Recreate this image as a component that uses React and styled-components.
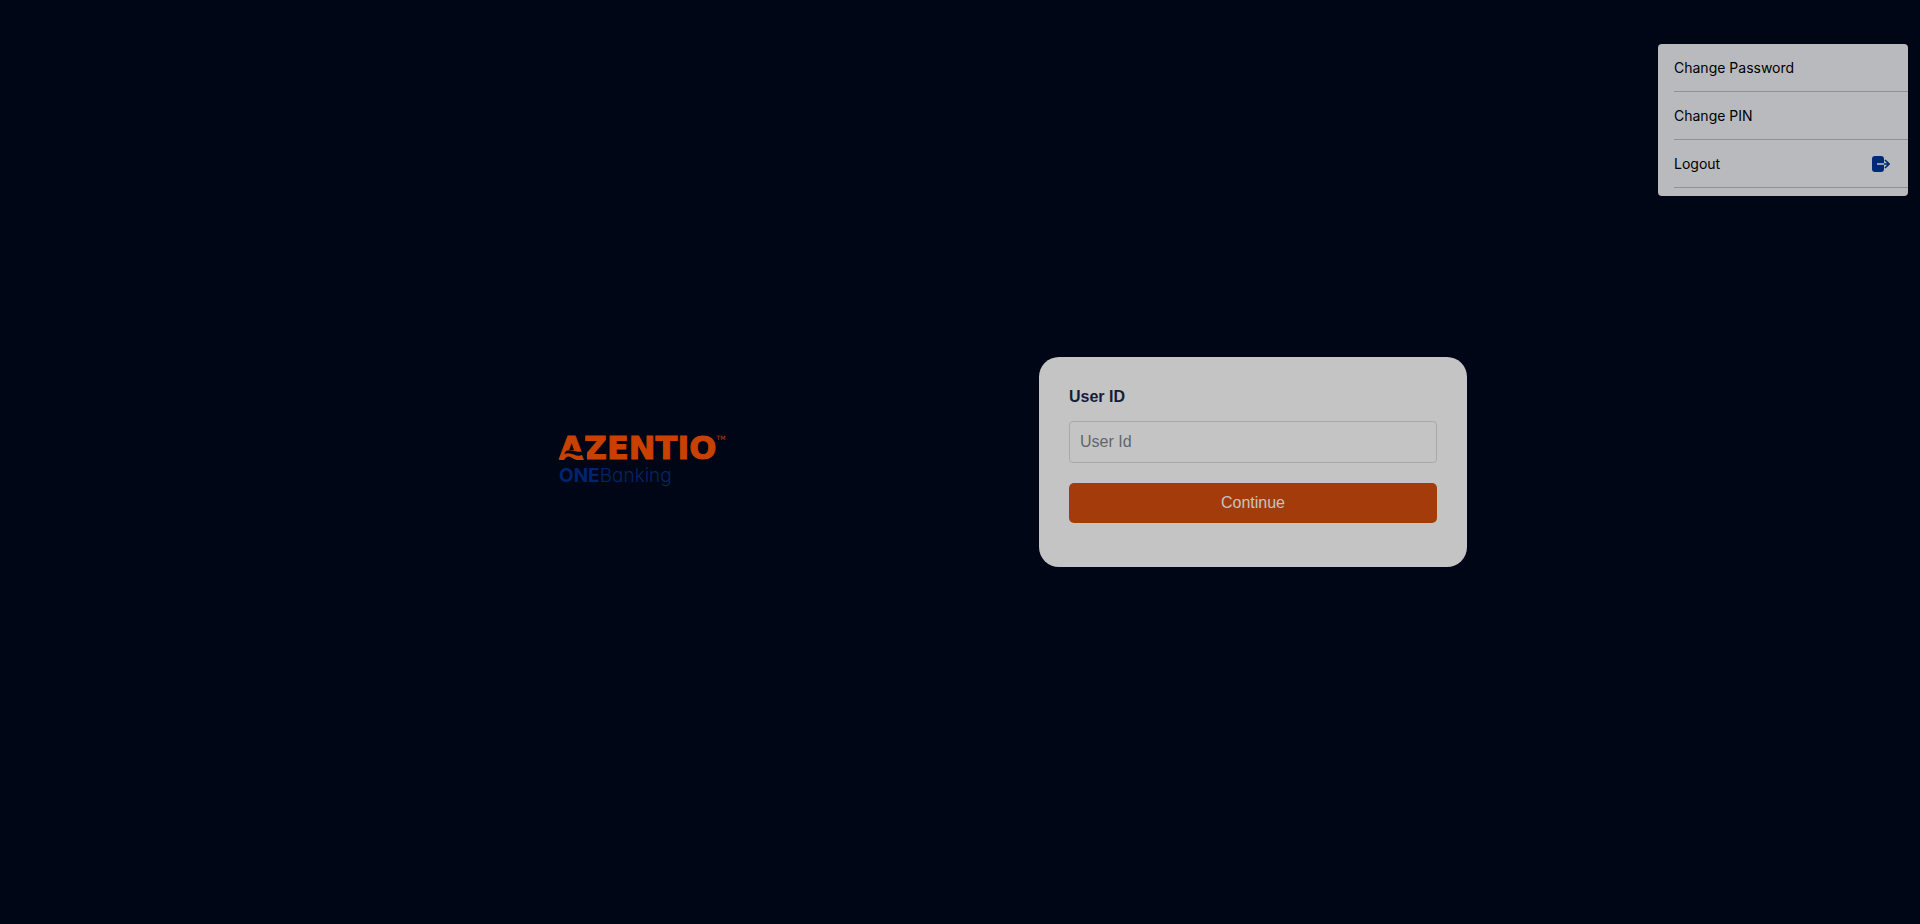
import React from "react";
import styled, { createGlobalStyle } from "styled-components";

const GlobalStyle = createGlobalStyle`
  *, *::before, *::after { box-sizing: border-box; }
  body {
    margin: 0;
    background: #000615;
    font-family: "Liberation Sans", Arial, sans-serif;
    font-size: 16px;
  }
`;

const Page = styled.main`
  position: relative;
  min-height: 100vh;
  display: grid;
  grid-template-columns: 25vw minmax(0, 428px);
  align-items: center;
  padding-left: calc(25vw + 79px);
`;

const Brand = styled.div`
  display: flex;
  flex-direction: column;
  align-items: flex-start;
`;

const Wordmark = styled.div`
  position: relative;
  display: flex;
  align-items: flex-start;
  font-family: "DejaVu Sans", sans-serif;
  font-weight: 700;
  font-size: 32px;
  line-height: 28px;
  color: #c84100;
  -webkit-text-stroke: 1px #c84100;
`;

const Trademark = styled.span`
  font-size: 6px;
  line-height: 8px;
  font-weight: 400;
  -webkit-text-stroke: 0;
`;

const Swoosh = styled.svg`
  position: absolute;
  left: 0;
  top: 0;
  width: 28px;
  height: 28px;
`;

const Product = styled.div`
  font-family: Inter, sans-serif;
  font-feature-settings: "cv11";
  font-size: 19px;
  line-height: 28px;
  font-weight: 300;
  color: #00246f;

  strong { font-weight: 700; }
`;

const Card = styled.form`
  display: flex;
  flex-direction: column;
  padding: 29px 30px 44px;
  border-radius: 20px;
  background: #c4c4c4;
`;

const Label = styled.label`
  margin-bottom: 14px;
  font-weight: 700;
  line-height: 21px;
  color: #161d38;
`;

const TextField = styled.input`
  width: 100%;
  height: 42px;
  margin-bottom: 20px;
  padding: 0 10px;
  border: 1px solid #a9a9a9;
  border-radius: 4px;
  background: transparent;
  font: inherit;
  color: #161d38;

  &::placeholder { color: #5f666d; opacity: 1; }
`;

const SubmitButton = styled.button`
  height: 40px;
  border: 0;
  border-radius: 5px;
  background: #a43b0b;
  color: #c4c4c4;
  font: inherit;
`;

const Menu = styled.nav`
  position: absolute;
  top: 44px;
  right: 12px;
  width: 250px;
  padding: 0 0 8px 16px;
  border-radius: 4px;
  background: #b9babd;
`;

const MenuItem = styled.button`
  display: flex;
  align-items: center;
  justify-content: space-between;
  width: 100%;
  height: 48px;
  padding: 0 18px 0 0;
  border: 0;
  border-bottom: 1px solid #8e9095;
  background: none;
  font-family: Inter, sans-serif;
  font-size: 14px;
  text-align: left;
  color: #000;
`;

function LogoutIcon() {
  return (
    <svg width="18" height="16" viewBox="0 0 18 16" fill="none" aria-hidden="true">
      <rect width="12" height="16" rx="3" fill="#002878" />
      <path d="M5 8H12" stroke="#b9babd" strokeWidth="1.6" />
      <path d="M12 8H17M13 4L17 8L13 12" stroke="#002878" strokeWidth="1.6" />
    </svg>
  );
}

export default function App() {
  return (
    <>
      <GlobalStyle />
      <Page>
        <Brand>
          <Wordmark>
            AZENTIO
            <Trademark>TM</Trademark>
            <Swoosh viewBox="0 0 28 28" fill="none" aria-hidden="true">
              <path d="M7 17C13 14 17 20 28 17V28H0L4 22Z" fill="#000615" />
              <path d="M5 16L0 26H5C10 18 13 26 19 26H25L23 21C17 24 13 17 5 20Z" fill="#c84100" />
            </Swoosh>
          </Wordmark>
          <Product>
            <strong>ONE</strong>Banking
          </Product>
        </Brand>
        <Card onSubmit={(event) => event.preventDefault()}>
          <Label htmlFor="user-id">User ID</Label>
          <TextField id="user-id" type="text" placeholder="User Id" />
          <SubmitButton type="submit">Continue</SubmitButton>
        </Card>
        <Menu aria-label="Account">
          <MenuItem type="button">Change Password</MenuItem>
          <MenuItem type="button">Change PIN</MenuItem>
          <MenuItem type="button">
            Logout
            <LogoutIcon />
          </MenuItem>
        </Menu>
      </Page>
    </>
  );
}
